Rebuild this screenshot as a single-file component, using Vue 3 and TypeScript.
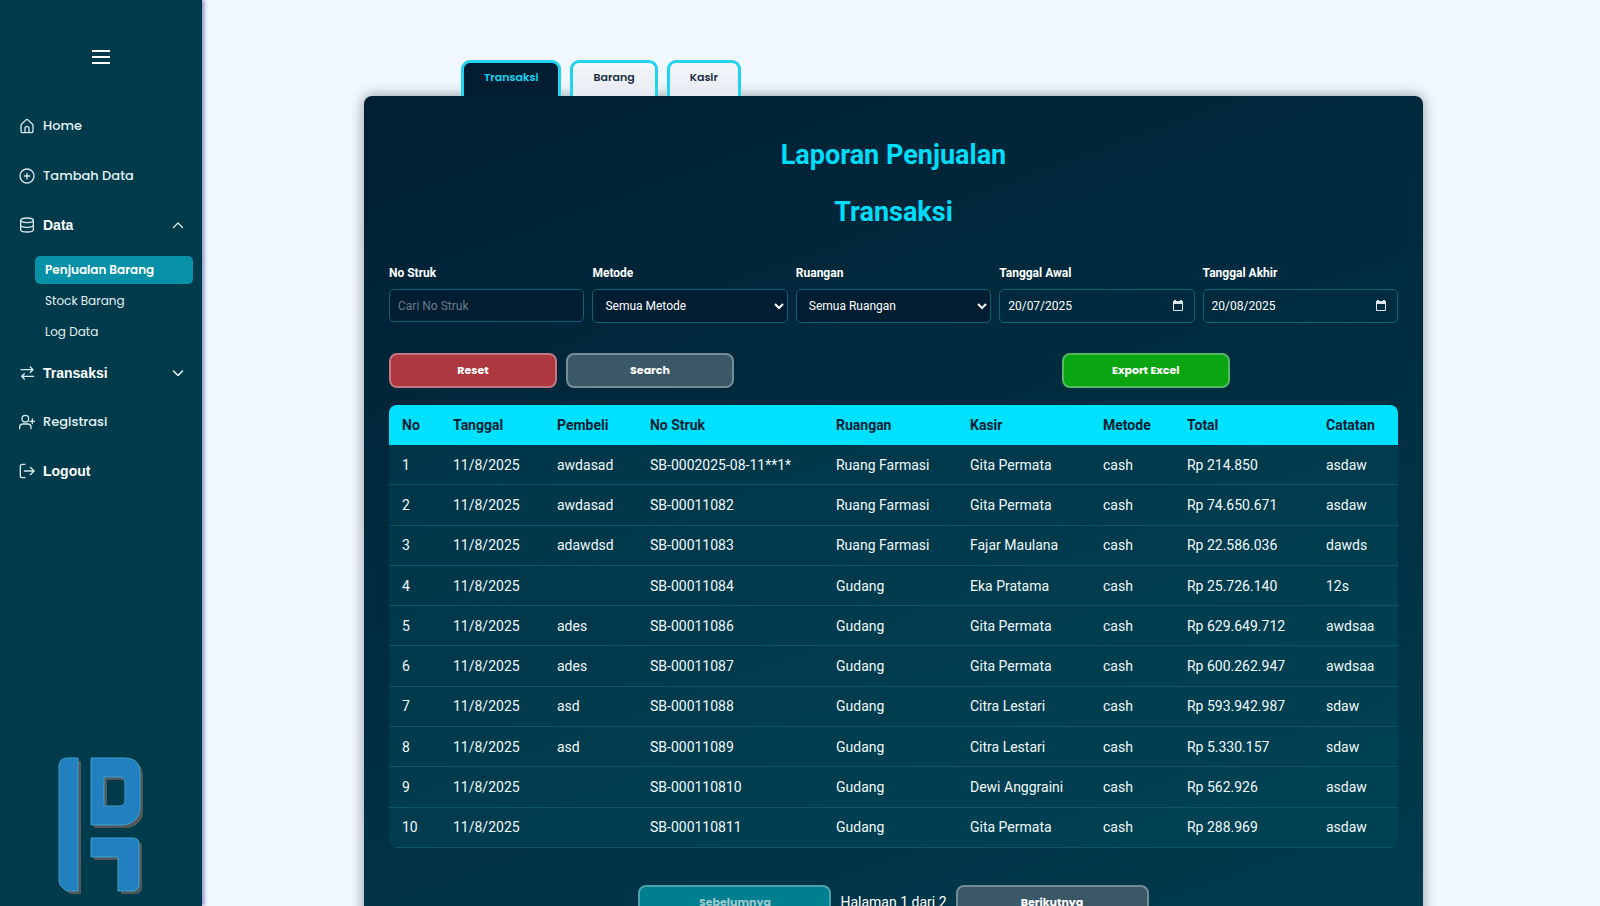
<script setup lang="ts">
import { ref } from 'vue'

interface Sale {
  date: string
  buyer: string
  receipt: string
  room: string
  cashier: string
  method: string
  total: string
  note: string
}

const tabs = ['Transaksi', 'Barang', 'Kasir']
const activeTab = ref('Transaksi')
const subItems = ['Penjualan Barang', 'Stock Barang', 'Log Data']
const activeSub = ref('Penjualan Barang')

const receiptQuery = ref('')
const method = ref('Semua Metode')
const room = ref('Semua Ruangan')
const startDate = ref('20/07/2025')
const endDate = ref('20/08/2025')

const columns = [
  { label: 'No', size: 51 },
  { label: 'Tanggal', size: 104 },
  { label: 'Pembeli', size: 93 },
  { label: 'No Struk', size: 186 },
  { label: 'Ruangan', size: 134 },
  { label: 'Kasir', size: 133 },
  { label: 'Metode', size: 84 },
  { label: 'Total', size: 139 },
  { label: 'Catatan', size: 85 },
]
const totalSize = columns.reduce((sum, c) => sum + c.size, 0)

const sale = (buyer: string, receipt: string, room: string, cashier: string, total: string, note: string): Sale => ({
  date: '11/8/2025', buyer, receipt, room, cashier, method: 'cash', total: `Rp ${total}`, note,
})

const sales: Sale[] = [
  sale('awdasad', 'SB-0002025-08-11**1*', 'Ruang Farmasi', 'Gita Permata', '214.850', 'asdaw'),
  sale('awdasad', 'SB-00011082', 'Ruang Farmasi', 'Gita Permata', '74.650.671', 'asdaw'),
  sale('adawdsd', 'SB-00011083', 'Ruang Farmasi', 'Fajar Maulana', '22.586.036', 'dawds'),
  sale('', 'SB-00011084', 'Gudang', 'Eka Pratama', '25.726.140', '12s'),
  sale('ades', 'SB-00011086', 'Gudang', 'Gita Permata', '629.649.712', 'awdsaa'),
  sale('ades', 'SB-00011087', 'Gudang', 'Gita Permata', '600.262.947', 'awdsaa'),
  sale('asd', 'SB-00011088', 'Gudang', 'Citra Lestari', '593.942.987', 'sdaw'),
  sale('asd', 'SB-00011089', 'Gudang', 'Citra Lestari', '5.330.157', 'sdaw'),
  sale('', 'SB-000110810', 'Gudang', 'Dewi Anggraini', '562.926', 'asdaw'),
  sale('', 'SB-000110811', 'Gudang', 'Gita Permata', '288.969', 'asdaw'),
]
</script>

<template>
  <div class="app">
    <aside class="sidebar">
      <button class="toggle" type="button" aria-label="Menu">
        <svg width="18" height="16" viewBox="0 0 18 16"><path d="M0 2h18M0 8h18M0 14h18" /></svg>
      </button>

      <nav class="nav">
        <a class="item" href="#home">
          <svg class="icon" viewBox="0 0 24 24"><path d="M3 11 Q3 10 4 9 L10.600 2.800 Q12 1.600 13.400 2.800 L20 9 Q21 10 21 11 V19 Q21 22 18 22 H6 Q3 22 3 19 Z M9 22 V15 Q9 13 11 13 H13 Q15 13 15 15 V22" /></svg>
          <span>Home</span>
        </a>
        <a class="item" href="#tambah">
          <svg class="icon" viewBox="0 0 24 24"><circle cx="12" cy="12" r="10.500" /><path d="M12 8v8M8 12h8" /></svg>
          <span>Tambah Data</span>
        </a>
        <button class="item group" type="button" aria-expanded="true">
          <svg class="icon" viewBox="0 0 24 24"><ellipse cx="12" cy="5" rx="9.500" ry="3.500" /><path d="M2.500 5v14c0 2 4 3.500 9.500 3.500s9.500-1.500 9.500-3.500V5M2.500 12c0 2 4 3.500 9.500 3.500s9.500-1.500 9.500-3.500" /></svg>
          <span>Data</span>
          <svg class="chevron" viewBox="0 0 12 12"><path d="M1.500 8.500 6 4l4.500 4.500" /></svg>
        </button>
        <div class="sub">
          <a
            v-for="name in subItems"
            :key="name"
            href="#data"
            :class="['sub-item', { active: name === activeSub }]"
            @click.prevent="activeSub = name"
          >{{ name }}</a>
        </div>
        <button class="item group" type="button" aria-expanded="false">
          <svg class="icon" viewBox="0 0 24 24"><path d="M3 7h18M17 3l4 4-4 4M22 17H4M8 13l-4 4 4 4" /></svg>
          <span>Transaksi</span>
          <svg class="chevron thick" viewBox="0 0 12 12"><path d="M1.500 4 6 8.500 10.500 4" /></svg>
        </button>
        <a class="item" href="#registrasi">
          <svg class="icon" viewBox="0 0 24 24"><circle cx="9.500" cy="7" r="5" /><path d="M1 22v-2c0-3 2-5 5-5h7c3 0 5 2 5 5v2M20 7.500v7M16.500 11h7" /></svg>
          <span>Registrasi</span>
        </a>
        <button class="item group" type="button">
          <svg class="icon" viewBox="0 0 24 24"><path d="M9 2H5Q2 2 2 5V19Q2 22 5 22H9M8 12h15M17 6.500l5.500 5.500-5.500 5.500" /></svg>
          <span>Logout</span>
        </button>
      </nav>

      <svg class="logo" width="86" height="139" viewBox="0 0 86 139" aria-hidden="true">
        <g class="logo-shadow" transform="translate(3 3)">
          <path d="M10 1H20V134H10Q8 134 5 131L3 129Q1 127 1 124V9Q1 1 10 1Z" />
          <path fill-rule="evenodd" d="M33 1H67Q82 1 82 16V52Q82 58 78 62Q72 68 66 68H33Z M46 20V49H61Q67 49 67 43V26Q67 20 61 20Z" />
          <path d="M33 81H75Q81 81 81 87V127Q81 134 74 134H60V100H33Z" />
        </g>
        <g class="logo-face">
          <path d="M10 1H20V134H10Q8 134 5 131L3 129Q1 127 1 124V9Q1 1 10 1Z" />
          <path fill-rule="evenodd" d="M33 1H67Q82 1 82 16V52Q82 58 78 62Q72 68 66 68H33Z M46 20V49H61Q67 49 67 43V26Q67 20 61 20Z" />
          <path d="M33 81H75Q81 81 81 87V127Q81 134 74 134H60V100H33Z" />
        </g>
      </svg>
    </aside>

    <main class="main">
      <div class="tabs">
        <button
          v-for="tab in tabs"
          :key="tab"
          type="button"
          :class="['tab', { active: tab === activeTab }]"
          @click="activeTab = tab"
        >{{ tab }}</button>
      </div>

      <section class="panel">
        <h1 class="title">Laporan Penjualan</h1>
        <h2 class="title">Transaksi</h2>

        <form class="filters" @submit.prevent>
          <div class="field">
            <label for="receipt">No Struk</label>
            <input id="receipt" v-model="receiptQuery" class="control text" type="text" placeholder="Cari No Struk" />
          </div>
          <div class="field">
            <label for="method">Metode</label>
            <select id="method" v-model="method" class="control">
              <option>Semua Metode</option>
              <option>cash</option>
            </select>
          </div>
          <div class="field">
            <label for="room">Ruangan</label>
            <select id="room" v-model="room" class="control">
              <option>Semua Ruangan</option>
              <option>Ruang Farmasi</option>
              <option>Gudang</option>
            </select>
          </div>
          <div class="field">
            <label for="start">Tanggal Awal</label>
            <div class="control date">
              <input id="start" v-model="startDate" type="text" />
              <button type="button" aria-label="Pilih tanggal awal">
                <svg width="10" height="12" viewBox="0 0 10 12"><path class="line" d="M.500 2.500h9v8h-9z" /><path class="fill" d="M0 1h10v3H0zM1 0h2v2H1zM7 0h2v2H7z" /></svg>
              </button>
            </div>
          </div>
          <div class="field">
            <label for="end">Tanggal Akhir</label>
            <div class="control date">
              <input id="end" v-model="endDate" type="text" />
              <button type="button" aria-label="Pilih tanggal akhir">
                <svg width="10" height="12" viewBox="0 0 10 12"><path class="line" d="M.500 2.500h9v8h-9z" /><path class="fill" d="M0 1h10v3H0zM1 0h2v2H1zM7 0h2v2H7z" /></svg>
              </button>
            </div>
          </div>
        </form>

        <div class="actions">
          <div class="action-group">
            <button class="btn red" type="button">Reset</button>
            <button class="btn gray" type="button">Search</button>
          </div>
          <div class="action-group centered">
            <button class="btn green" type="button">Export Excel</button>
          </div>
        </div>

        <table class="table">
          <colgroup>
            <col v-for="c in columns" :key="c.label" :style="{ width: (c.size / totalSize) * 100 + '%' }" />
          </colgroup>
          <thead>
            <tr>
              <th v-for="c in columns" :key="c.label" scope="col">{{ c.label }}</th>
            </tr>
          </thead>
          <tbody>
            <tr v-for="(s, i) in sales" :key="s.receipt">
              <td>{{ i + 1 }}</td>
              <td>{{ s.date }}</td>
              <td>{{ s.buyer }}</td>
              <td>{{ s.receipt }}</td>
              <td>{{ s.room }}</td>
              <td>{{ s.cashier }}</td>
              <td>{{ s.method }}</td>
              <td>{{ s.total }}</td>
              <td>{{ s.note }}</td>
            </tr>
          </tbody>
        </table>

        <div class="pager">
          <button class="btn wide teal" type="button" disabled>Sebelumnya</button>
          <span>Halaman 1 dari 2</span>
          <button class="btn wide gray" type="button">Berikutnya</button>
        </div>
      </section>
    </main>
  </div>
</template>

<style>
body {
  margin: 0;
  background: #f0f7ff;
}
</style>

<style scoped>
* {
  box-sizing: border-box;
}

.app {
  display: flex;
  height: 100vh;
  background: #f0f7ff;
  font-family: Roboto, "Liberation Sans", sans-serif;
}

button {
  cursor: pointer;
}

.sidebar {
  display: flex;
  flex-direction: column;
  flex: none;
  z-index: 1;
  width: 202px;
  padding: 49px 0 10px;
  background: #003b4b;
  box-shadow: 2px 0 4px #8388c8;
}

.toggle {
  align-self: center;
  height: 16px;
  padding: 0;
  border: 0;
  background: none;
}

.toggle svg {
  display: block;
  fill: none;
  stroke: #fff;
  stroke-width: 2;
  stroke-linecap: round;
}

.nav {
  display: flex;
  flex-direction: column;
  margin-top: 36px;
}

.item {
  display: flex;
  align-items: center;
  gap: 8px;
  height: 50px;
  padding: 0 18px 0 19px;
  border: 0;
  background: none;
  color: #e4f0f4;
  font: 500 13px/20px Poppins, Inter, "Liberation Sans", sans-serif;
  text-align: left;
  text-decoration: none;
}

.group {
  height: 48px;
  color: #fff;
  font: 700 14px/20px "Liberation Sans", Arial, sans-serif;
}

.icon {
  flex: none;
  width: 16px;
  height: 16px;
  fill: none;
  stroke: #d5e8ee;
  stroke-width: 2;
  stroke-linecap: round;
  stroke-linejoin: round;
}

.chevron {
  width: 12px;
  height: 12px;
  margin-left: auto;
  fill: none;
  stroke: #e4f0f4;
  stroke-width: 1.2;
  stroke-linecap: round;
  stroke-linejoin: round;
}

.thick {
  stroke-width: 1.6;
}

.sub {
  display: flex;
  flex-direction: column;
  gap: 3px;
  margin: 7px 9px 3px 35px;
}

.sub-item {
  height: 28px;
  padding: 0 10px;
  border-radius: 5px;
  color: #e4f0f4;
  font: 400 12px/28px Poppins, Inter, "Liberation Sans", sans-serif;
  text-decoration: none;
}

.sub-item.active {
  background: #0691a7;
  color: #fff;
  font-weight: 600;
}

.logo {
  flex: none;
  margin: auto 0 0 58px;
}

.logo-shadow {
  fill: #54575a;
}

.logo-face {
  fill: #2380c0;
  stroke: #3fa0c8;
  stroke-width: 1;
}

.main {
  flex: 1;
  min-width: 0;
  padding: 60px 177px 0 162px;
  overflow-y: auto;
  scrollbar-width: none;
}

.tabs {
  display: flex;
  gap: 9px;
  padding-left: 97px;
}

.tab {
  height: 36px;
  padding: 0 20px 5px;
  border: 3px solid #22d3ee;
  border-bottom: 0;
  border-radius: 9px 9px 0 0;
  background: linear-gradient(#f4f8fd, #e6eaf0);
  color: #1b2f42;
  font: 600 11px/16px Poppins, Inter, "Liberation Sans", sans-serif;
}

.tab.active {
  background: #001d31;
  color: #12d6f0;
}

.panel {
  padding: 31px 25px 40px 25px;
  border-radius: 8px;
  background: linear-gradient(160deg, #001f33, #003c4e);
  box-shadow: 0 0 14px rgba(0, 0, 0, 0.4);
  color: #fff;
}

.title {
  margin: 0;
  color: #00dcfa;
  font-size: 27px;
  font-weight: 700;
  line-height: 57px;
  text-align: center;
}

.filters {
  display: grid;
  grid-template-columns: repeat(5, 1fr);
  gap: 8px;
  align-items: start;
  margin-top: 24px;
}

.field {
  display: flex;
  flex-direction: column;
  gap: 8px;
}

.field label {
  font-size: 12px;
  font-weight: 700;
  line-height: 16px;
}

.control {
  width: 100%;
  height: 34px;
  padding: 0 8px;
  border: 1px solid #086577;
  border-radius: 5px;
  background: #001d31;
  color: #fff;
  font: 400 12px/16px Roboto, sans-serif;
}

.control.text {
  height: 33px;
}

.control::placeholder {
  color: #6c7a85;
}

.control.date {
  display: flex;
  align-items: center;
  padding: 0 11px 0 8px;
  background: none;
}

.date input {
  flex: 1;
  min-width: 0;
  padding: 0;
  border: 0;
  background: none;
  color: #fff;
  font: inherit;
}

.date button {
  padding: 0;
  border: 0;
  background: none;
}

.date svg {
  display: block;
}

.line {
  fill: none;
  stroke: #dce8ee;
}

.fill {
  fill: #dce8ee;
}

.actions {
  display: grid;
  grid-template-columns: 1fr 1fr;
  margin-top: 30px;
}

.action-group {
  display: flex;
  gap: 9px;
}

.centered {
  justify-content: center;
}

.btn {
  width: 168px;
  height: 35px;
  padding: 0 0 2px;
  border: 2px solid #788b98;
  border-radius: 8px;
  color: #fff;
  font: 700 11px/16px Poppins, Inter, "Liberation Sans", sans-serif;
}

.red {
  border-color: #c17680;
  background: #ad383f;
}

.gray {
  border-color: #748d98;
  background: #3b5866;
}

.green {
  border-color: #52b965;
  background: #0ba511;
}

.teal {
  border-color: #4d9fae;
  background: #007f8e;
  color: #9fc9d0;
}

.wide {
  width: 193px;
}

.table {
  width: 100%;
  height: 443px;
  margin-top: 17px;
  border-spacing: 0;
  border-radius: 8px;
  overflow: hidden;
  table-layout: fixed;
  background: rgba(0, 96, 112, 0.25);
  font-size: 14px;
  line-height: 16px;
}

.table th,
.table td {
  padding: 0 0 0 13px;
  text-align: left;
  white-space: nowrap;
}

.table th {
  height: 40px;
  background: #00e1ff;
  color: #001d31;
  font-weight: 700;
}

.table td {
  border-bottom: 1px solid #0a5666;
  color: #f2f8fa;
}

.pager {
  display: flex;
  justify-content: center;
  align-items: center;
  gap: 9px;
  margin-top: 37px;
  font-size: 14px;
  line-height: 16px;
}

.pager span {
  padding-bottom: 2px;
}
</style>
